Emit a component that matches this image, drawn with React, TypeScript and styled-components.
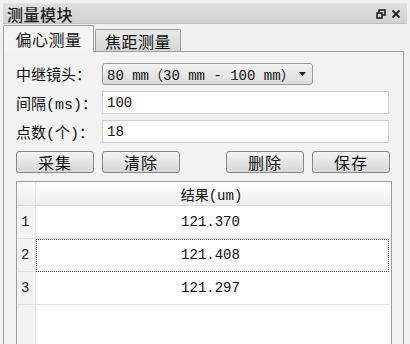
import React from "react";
import styled, { createGlobalStyle } from "styled-components";

const Global = createGlobalStyle`
  html, body { margin: 0; padding: 0; background: #f0f0f0; }
  * { box-sizing: border-box; }
`;

const FONT = `"Liberation Mono", "Noto Sans CJK SC", monospace`;
const CJK = `"Noto Sans CJK SC", "Liberation Sans", sans-serif`;

const Window = styled.div`
  width: 410px;
  height: 344px;
  overflow: hidden;
  background: #f0f0f0;
  padding: 3px 3px 0 3px;
  display: flex;
  flex-direction: column;
  font-family: ${FONT};
  color: #111;
`;

const TitleBar = styled.div`
  height: 21px;
  display: flex;
  align-items: center;
  justify-content: space-between;
  padding: 0 6px 0 4px;
  background: linear-gradient(#dedede, #d2d2d2);
  border-bottom: 1px solid #c0c0c0;
  border-top: 1px solid #e6e6e6;
`;

const Title = styled.span`
  font-family: ${CJK};
  font-size: 16px;
  font-weight: 500;
  letter-spacing: 0.5px;
  color: #1a1a1a;
`;

const TitleIcons = styled.div`
  display: flex;
  align-items: center;
  gap: 5px;
`;

const TabBar = styled.div`
  height: 27px;
  display: flex;
  align-items: flex-end;
  padding-top: 2px;
`;

const Tab = styled.div<{ $active?: boolean }>`
  font-family: ${CJK};
  font-size: 16px;
  letter-spacing: 0.5px;
  display: flex;
  align-items: center;
  justify-content: center;
  border: 1px solid #9c9c9c;
  border-bottom: none;
  border-radius: 2px 2px 0 0;
  width: ${(p) => (p.$active ? "91px" : "86px")};
  height: ${(p) => (p.$active ? "27px" : "22px")};
  margin-bottom: ${(p) => (p.$active ? "-1px" : "0")};
  margin-left: ${(p) => (p.$active ? "0" : "1px")};
  background: ${(p) =>
    p.$active ? "#f4f4f4" : "linear-gradient(#eaeaea, #d6d6d6)"};
  position: relative;
  z-index: ${(p) => (p.$active ? 2 : 1)};
  padding-top: ${(p) => (p.$active ? "0" : "1px")};
`;

const Pane = styled.div`
  flex: 1;
  border: 1px solid #9c9c9c;
  border-bottom: none;
  width: 401px;
  background: #f2f2f2;
  padding: 11px 12px 0 12px;
  display: flex;
  flex-direction: column;
`;

const Form = styled.div`
  display: grid;
  grid-template-columns: 86px 1fr;
  row-gap: 6px;
  align-items: center;
`;

const Label = styled.div`
  font-family: ${FONT};
  font-size: 15px;
  white-space: nowrap;
`;

const Combo = styled.div`
  width: 211px;
  height: 22px;
  display: flex;
  align-items: center;
  justify-content: space-between;
  padding: 0 6px 0 4px;
  border: 1px solid #9a9a9a;
  border-radius: 3px;
  background: linear-gradient(#f4f4f4, #dadada);
  font-size: 14px;
  white-space: nowrap;
  svg { flex-shrink: 0; }
`;

const Input = styled.div`
  width: 287px;
  height: 23px;
  display: flex;
  align-items: center;
  padding: 0 4px;
  background: #ffffff;
  border: 1px solid #cfcfcf;
  font-size: 14px;
`;

const ButtonRow = styled.div`
  display: flex;
  margin-top: 8px;
  height: 22px;
`;

const Button = styled.div<{ $gapBefore?: number }>`
  width: 78px;
  height: 22px;
  margin-left: ${(p) => p.$gapBefore ?? 0}px;
  display: flex;
  align-items: center;
  justify-content: center;
  border: 1px solid #888888;
  border-radius: 3px;
  background: linear-gradient(#f5f5f5, #d6d6d6);
  font-family: ${CJK};
  font-size: 16px;
  letter-spacing: 1px;
`;

const Table = styled.div`
  margin-top: 8px;
  width: 376px;
  flex: 1;
  min-height: 190px;
  background: #ffffff;
  border: 1px solid #9c9c9c;
  border-bottom: none;
  display: grid;
  grid-template-columns: 19px 1fr;
  grid-template-rows: 24px repeat(3, 33px) 1fr;
  font-size: 14px;
`;

const Corner = styled.div`
  background: linear-gradient(#fafafa, #ececec);
  border-right: 1px solid #e2e2e2;
  border-bottom: 1px solid #dadada;
`;

const HeaderCell = styled.div`
  background: linear-gradient(#ffffff, #eeeeee);
  border-bottom: 1px solid #dadada;
  display: flex;
  align-items: center;
  justify-content: center;
  font-size: 14px;
  padding-right: 4px;
`;

const RowHead = styled.div`
  background: #f3f3f3;
  border-right: 1px solid #e2e2e2;
  border-bottom: 1px solid #dcdcdc;
  display: flex;
  align-items: center;
  padding-left: 4px;
  font-size: 14px;
  color: #222;
`;

const Cell = styled.div<{ $focus?: boolean }>`
  border-bottom: 1px solid #e2e2e2;
  display: flex;
  align-items: center;
  justify-content: center;
  padding-right: 4px;
  font-size: 14px;
  margin-right: 2px;
  outline: ${(p) => (p.$focus ? "1px dotted #555" : "none")};
  outline-offset: -1px;
`;

const Filler = styled.div`
  background: #f3f3f3;
  border-right: 1px solid #e2e2e2;
`;

const rows = ["121.370", "121.408", "121.297"];

export default function App() {
  return (
    <>
      <Global />
      <Window>
        <TitleBar>
          <Title>测量模块</Title>
          <TitleIcons>
            <svg width="10" height="10" viewBox="0 0 10 10">
              <rect x="3" y="1" width="6" height="5" fill="none" stroke="#222" strokeWidth="1.6" />
              <rect x="1" y="4" width="5" height="5" fill="#d8d8d8" stroke="#222" strokeWidth="1.6" />
            </svg>
            <svg width="10" height="10" viewBox="0 0 10 10">
              <path d="M1.5 1.5 L8.5 8.5 M8.5 1.5 L1.5 8.5" stroke="#222" strokeWidth="1.8" />
            </svg>
          </TitleIcons>
        </TitleBar>
        <TabBar>
          <Tab $active>偏心测量</Tab>
          <Tab>焦距测量</Tab>
        </TabBar>
        <Pane>
          <Form>
            <Label>中继镜头：</Label>
            <Combo>
              <span>80 mm（30 mm - 100 mm）</span>
              <svg width="7" height="4" viewBox="0 0 7 4">
                <path d="M0 0 L7 0 L3.5 4 Z" fill="#222" />
              </svg>
            </Combo>
            <Label>间隔(ms)：</Label>
            <Input>100</Input>
            <Label>点数(个)：</Label>
            <Input>18</Input>
          </Form>
          <ButtonRow>
            <Button>采集</Button>
            <Button $gapBefore={8}>清除</Button>
            <Button $gapBefore={46}>删除</Button>
            <Button $gapBefore={8}>保存</Button>
          </ButtonRow>
          <Table>
            <Corner />
            <HeaderCell>结果(um)</HeaderCell>
            {rows.map((v, i) => (
              <React.Fragment key={v}>
                <RowHead>{i + 1}</RowHead>
                <Cell $focus={i === 1}>{v}</Cell>
              </React.Fragment>
            ))}
            <Filler />
            <div />
          </Table>
        </Pane>
      </Window>
    </>
  );
}
